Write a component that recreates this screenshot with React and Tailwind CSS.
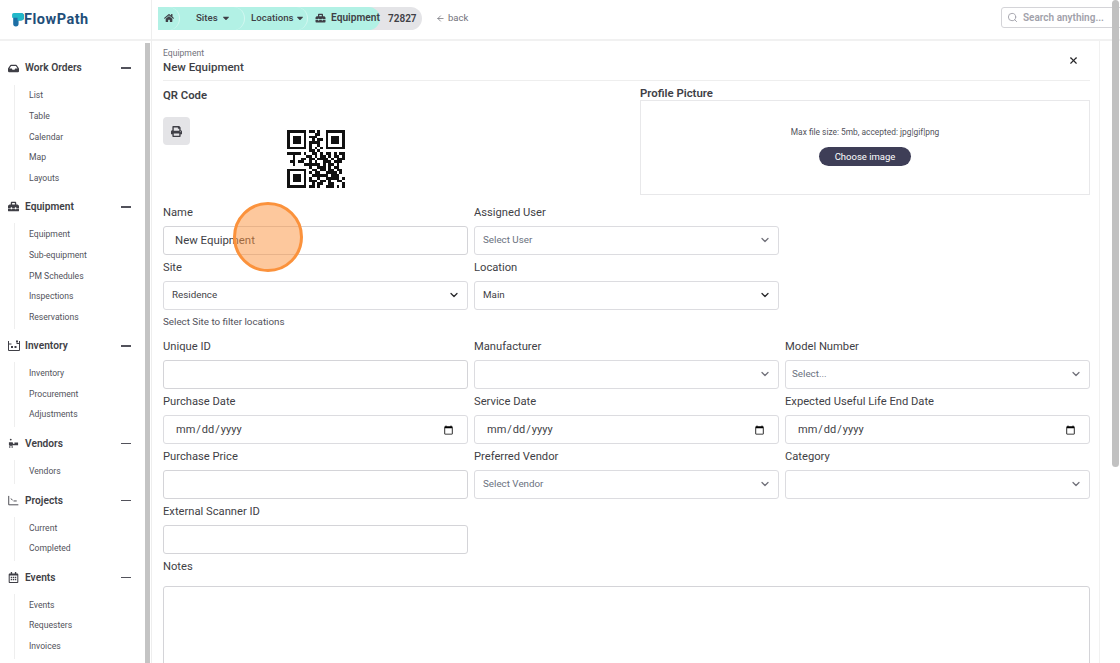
import React from "react";
import { FaHome, FaToolbox, FaPrint, FaCaretDown, FaInbox, FaRegCalendarAlt } from "react-icons/fa";
import { ChevronDown, Search, X, ArrowLeft } from "lucide-react";

const nav = [
  { title: "Work Orders", icon: <FaInbox className="w-[11px] h-[11px]" />, items: ["List", "Table", "Calendar", "Map", "Layouts"] },
  { title: "Equipment", icon: <FaToolbox className="w-[11px] h-[11px]" />, items: ["Equipment", "Sub-equipment", "PM Schedules", "Inspections", "Reservations"] },
  {
    title: "Inventory",
    icon: (
      <svg viewBox="0 0 12 11" className="w-[12px] h-[11px]" fill="none" stroke="currentColor" strokeWidth="1">
        <path d="M.5 1v9.5h11V1M.5 4h3M8.5 3.5h3" />
        <path d="M3 6h2v2H3zM6.5 6h2v2h-2z" fill="currentColor" stroke="none" />
        <path d="M8 .5h2v2H8z" fill="currentColor" stroke="none" />
      </svg>
    ),
    items: ["Inventory", "Procurement", "Adjustments"],
  },
  {
    title: "Vendors",
    icon: (
      <svg viewBox="0 0 12 11" className="w-[11px] h-[11px]" fill="currentColor">
        <circle cx="3" cy="1.2" r="1" />
        <path d="M1 4h4l1 2h1V4.5h4V7.5H6L5 7v3.5H4V8H2.5v2.5h-1V7H1z" />
      </svg>
    ),
    items: ["Vendors"],
  },
  {
    title: "Projects",
    icon: (
      <svg viewBox="0 0 12 11" className="w-[11px] h-[11px]" fill="none" stroke="currentColor" strokeWidth="1">
        <path d="M.8 .5v9.7h10.5" />
        <path d="M3 3.5l2 1.5M6 6h3.5" />
      </svg>
    ),
    items: ["Current", "Completed"],
  },
  { title: "Events", icon: <FaRegCalendarAlt className="w-[11px] h-[11px]" />, items: ["Events", "Requesters", "Invoices"] },
];

const qr = [
  "111111101101001111111",
  "100000100011001000001",
  "101110101110001011101",
  "101110100101101011101",
  "101110101111001011101",
  "100000101001001000001",
  "111111101010101111111",
  "000000001101000000000",
  "111110100110101101011",
  "001000011010110101101",
  "001001101101111010111",
  "011011001010011101110",
  "001000111111010110100",
  "000000001001110101100",
  "111111100110110110110",
  "100000101011001111010",
  "101110100111111011100",
  "101110101001001111101",
  "101110101110110100110",
  "100000100101100110001",
  "111111101101001110101",
];

function Label({ children }) {
  return <label className="block h-[21px] text-[11.2px] leading-[16px] text-[#3f3f46]">{children}</label>;
}

function TextField({ label, value }) {
  return (
    <div>
      <Label>{label}</Label>
      <input readOnly value={value || ""} className="block w-full h-[29px] border border-[#d4d4d8] rounded-[3px] px-[11px] pb-[1px] text-[11.4px] text-[#3f3f46] bg-white outline-none" />
    </div>
  );
}

function DateField({ label }) {
  return (
    <div>
      <Label>{label}</Label>
      <input type="date" className="block w-full h-[29px] border border-[#dcdce0] rounded-[3px] px-[11px] pt-[1px] text-[11px] text-[#3f3f46] bg-white outline-none" />
    </div>
  );
}

function SelectField({ label, value, muted, dark, tight }) {
  return (
    <div>
      <Label>{label}</Label>
      <div className="relative">
        <select className={`block w-full h-[29px] appearance-none border border-[#dcdce0] rounded-[3px] text-[9.8px] bg-white outline-none ${tight ? "px-[6px]" : "px-[8px]"} ${muted ? "text-[#6b7280]" : "text-[#3f3f46]"}`}>
          <option>{value || ""}</option>
        </select>
        <ChevronDown className={`absolute right-[8px] top-[8px] w-[12px] h-[12px] ${dark ? "text-[#27272a]" : "text-[#71717a]"}`} strokeWidth={2.5} />
      </div>
    </div>
  );
}

export default function App() {
  return (
    <div className="relative flex h-[663px] w-[1120px] overflow-hidden bg-white font-['Roboto',sans-serif] text-[#3f3f46]">
      {/* left */}
      <aside className="relative w-[152px] shrink-0 border-r border-[#eeeeee]">
        <div className="h-[41px] border-b-2 border-[#f1f1f1] flex items-center pl-[11px]">
          <svg viewBox="0 0 12 13" className="w-[13px] h-[14px]">
            <path d="M3 0h6a3 3 0 0 1 3 3v1a3 3 0 0 1-3 3H7v3a2.5 2.5 0 0 1-5 0V3z" fill="#1d6fa5" />
            <path d="M1 1.5A1.5 1.5 0 0 1 2.5 0H9a3 3 0 0 1 3 3v1a3 3 0 0 1-3 3H6V4.5H1z" fill="#22b8c9" />
          </svg>
          <span className="text-[14.5px] font-bold text-[#1f4e79] tracking-[0.5px]">FlowPath</span>
        </div>
        <nav className="pt-[18px] pl-[8px]">
          {nav.map((s) => (
            <div key={s.title} className="mb-[7.5px]">
              <div className="flex items-center h-[18px] w-[123px]">
                <span className="w-[17px] flex shrink-0 text-[#3f3f46]">{s.icon}</span>
                <span className="text-[10.2px] font-semibold text-[#3f3f46]">{s.title}</span>
                <span className="ml-auto w-[10px] h-[1.5px] bg-[#52525b]" />
              </div>
              <ul className="ml-[6px] mt-[7.5px] pt-[1px] pl-[14px] border-l border-[#eeeeee] pb-[2px]">
                {s.items.map((i) => (
                  <li key={i} className="h-[20.6px] flex items-center text-[8.6px] text-[#52525b]">{i}</li>
                ))}
              </ul>
            </div>
          ))}
        </nav>
        <div className="absolute left-[145px] top-[43px] bottom-0 w-[5px] bg-[#c4c4c4]" />
      </aside>

      {/* right */}
      <main className="flex-1 min-w-0">
        <header className="h-[41px] border-b-2 border-[#f1f1f1] flex items-center pl-[6px] pb-[3px] relative">
          <div className="flex items-center h-[23px] text-[9.7px] font-medium text-[#3f3f46]">
            <div className="h-full flex bg-[#e4e4e7] rounded-r-full">
              <div className="h-full flex bg-[#b2f1e5] rounded-r-full">
                <div className="h-full w-[22px] flex items-center justify-center rounded-r-full border-r border-[#d3f7f0]">
                  <FaHome className="w-[10px] h-[10px]" />
                </div>
                <div className="h-full w-[65px] pl-[16px] flex items-center gap-[3px] rounded-r-full border-r border-[#d3f7f0]">
                  Sites <FaCaretDown className="w-[10px] h-[10px]" />
                </div>
                <div className="h-full w-[63px] pl-[6px] flex items-center gap-[1px] rounded-r-full border-r border-[#d3f7f0]">
                  Locations <FaCaretDown className="w-[10px] h-[10px]" />
                </div>
                <div className="h-full w-[72px] pl-[7px] pb-[1px] flex items-center gap-[5px] rounded-r-full text-[10.2px] font-semibold">
                  <FaToolbox className="w-[11px] h-[10px]" /> Equipment
                </div>
              </div>
              <div className="w-[42px] flex items-center pl-[8px] font-semibold text-[10px]">72827</div>
            </div>
            <div className="ml-[14px] flex items-center gap-[3px] text-[9.5px] font-normal text-[#71717a]">
              <ArrowLeft className="w-[9px] h-[9px]" /> back
            </div>
          </div>
          <div className="absolute left-[849px] top-[7px] w-[125px] h-[21px] border border-[#d4d4d8] rounded-[3px] flex items-center pl-[5px] gap-[5px] text-[10px] font-semibold text-[#a1a1aa] whitespace-nowrap">
            <Search className="w-[11px] h-[11px] shrink-0" /> Search anything...
          </div>
        </header>

        <div className="ml-[11px] mr-[20px] border-r border-[#f1f1f1] h-[622px] overflow-hidden">
          <div className="relative pt-[6px] h-[40px] border-b border-[#eeeeee] mr-[9px]">
            <div className="text-[8.6px] leading-[13px] text-[#71717a]">Equipment</div>
            <div className="text-[11.5px] leading-[14px] font-medium text-[#3f3f46]">New Equipment</div>
            <X className="absolute right-[11px] top-[14px] w-[11px] h-[11px] text-[#27272a]" strokeWidth={2.5} />
          </div>

          <div className="grid grid-cols-[477px_450px] h-[122px]">
            <div>
              <div className="text-[11.3px] font-semibold leading-[16px] mt-[7px]">QR Code</div>
              <div className="flex">
                <button className="w-[27px] h-[28px] mt-[13px] rounded-[4px] bg-[#e4e4e7] flex items-center justify-center text-[#3f3f46]">
                  <FaPrint className="w-[11px] h-[11px]" />
                </button>
                <svg viewBox="0 0 21 21" shapeRendering="crispEdges" className="w-[58px] h-[58px] ml-[97px] mt-[26px]">
                  {qr.flatMap((row, y) =>
                    [...row].map((c, x) => (c === "1" ? <rect key={x + "-" + y} x={x} y={y} width="1" height="1" fill="#111" /> : null))
                  )}
                </svg>
              </div>
            </div>
            <div>
              <div className="text-[11.4px] font-semibold leading-[14px] mt-[5px]">Profile Picture</div>
              <div className="h-[95px] border border-[#e8e8ea] flex flex-col items-center pt-[25px]">
                <div className="text-[8.4px] leading-[12px] text-[#52525b]">Max file size: 5mb, accepted: jpg|gif|png</div>
                <button className="mt-[9px] w-[92px] h-[19px] rounded-full bg-[#3e3e57] text-white text-[9.5px] leading-[19px]">Choose image</button>
              </div>
            </div>
          </div>

          <div className="mt-[2px] grid grid-cols-[305px_305px_305px] gap-x-[6px] gap-y-[5px]">
            <TextField label="Name" value="New Equipment" />
            <SelectField label="Assigned User" value="Select User" muted />
            <div />
            <SelectField label="Site" value="Residence" dark />
            <SelectField label="Location" value="Main" dark />
            <div />
            <div className="col-span-3 h-[19px] text-[9.8px] leading-[13px] text-[#52525b]">Select Site to filter locations</div>
            <TextField label="Unique ID" />
            <SelectField label="Manufacturer" />
            <SelectField label="Model Number" value="Select..." muted tight />
            <DateField label="Purchase Date" />
            <DateField label="Service Date" />
            <DateField label="Expected Useful Life End Date" />
            <TextField label="Purchase Price" />
            <SelectField label="Preferred Vendor" value="Select Vendor" muted />
            <SelectField label="Category" />
            <TextField label="External Scanner ID" />
            <div className="col-span-2" />
            <div className="col-span-3">
              <label className="block h-[27px] text-[11.2px] leading-[16px]">Notes</label>
              <textarea readOnly className="block w-full h-[120px] border border-[#d4d4d8] rounded-[3px] outline-none resize-none" />
            </div>
          </div>
        </div>
      </main>

      <div className="absolute left-[1112px] top-0 h-[467px] w-[7px] rounded-full bg-[#c1c1c1]" />
      <div className="absolute left-[233px] top-[202px] w-[70px] h-[70px] rounded-full bg-[#fb923c]/50 border-[3px] border-[#fb923c]" />
    </div>
  );
}
